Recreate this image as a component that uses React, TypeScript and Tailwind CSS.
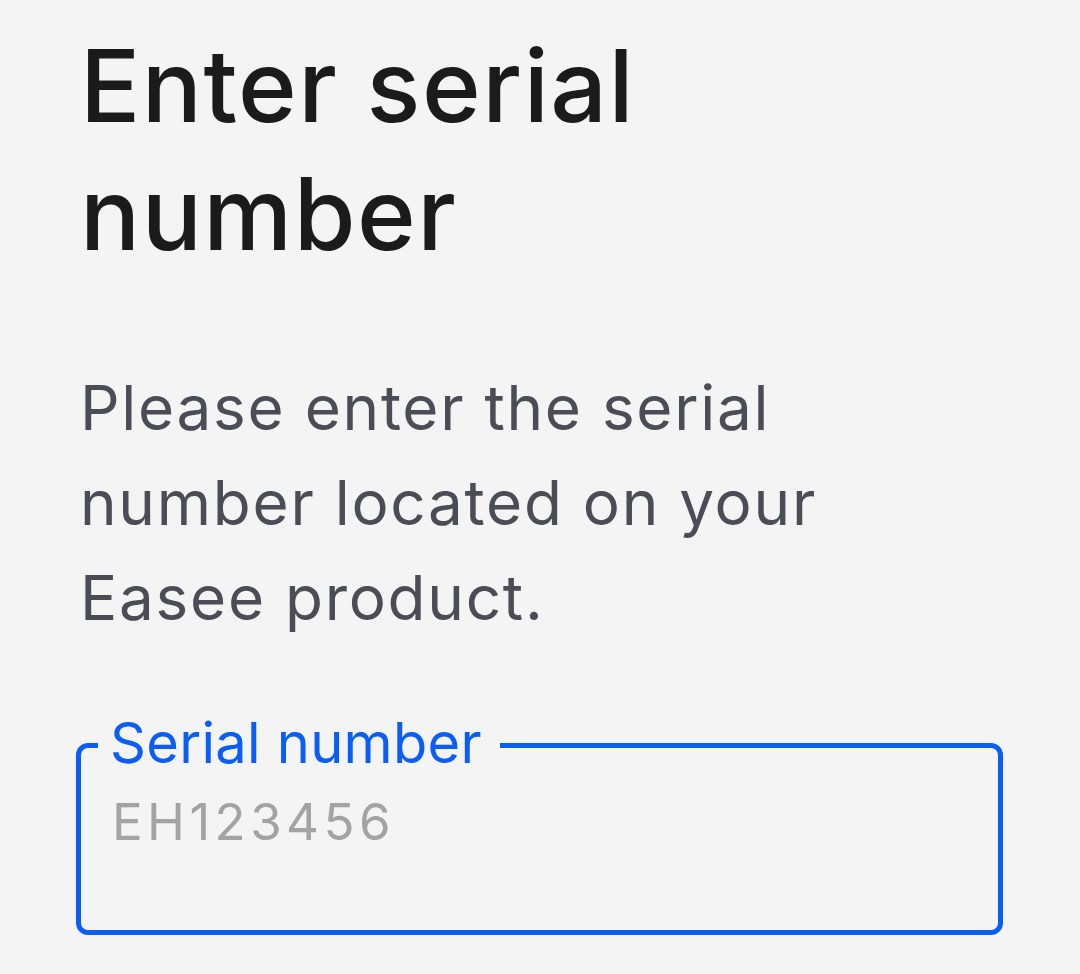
export default function App() {
  return (
    <div className="min-h-screen bg-[#f4f4f4] pl-[76px] pt-[22px] font-['Inter',sans-serif]">
      <h1 className="pl-[4px] text-[100px] leading-[128px] font-medium tracking-[0.015em] text-[#1b1b1b]">
        Enter serial
        <br />
        number
      </h1>

      <p className="mt-[82px] pl-[4px] text-[62px] leading-[95px] tracking-[0.028em] text-[#4a4d55] w-[840px]">
        Please enter the serial number located on your Easee product.
      </p>

      {/* Outlined text field */}
      <div className="relative mt-[98px] w-[927px] h-[192px] rounded-[12px] border-[5px] border-[#0a5ef6]">
        <label className="absolute left-[17px] top-[-33px] bg-[#f4f4f4] pl-[12px] pr-[18px] text-[56px] leading-[56px] tracking-[0.005em] text-[#0a5ef6]">
          Serial number
        </label>
        <input
          className="mt-[43px] block h-[62px] w-full bg-transparent pl-[31px] text-[51px] leading-[62px] tracking-[0.087em] text-[#1b1b1b] outline-none placeholder:text-[#a3a3a3]"
          placeholder="EH123456"
        />
      </div>
    </div>
  );
}
